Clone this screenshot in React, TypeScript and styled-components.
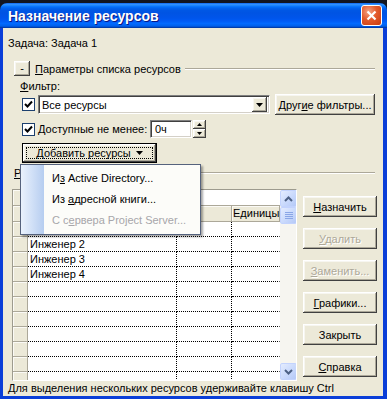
import React from "react";
import styled, { createGlobalStyle, css } from "styled-components";

const GlobalStyle = createGlobalStyle`
  html, body {
    margin: 0;
    padding: 0;
    background: #121622;
  }
  body {
    width: 387px;
    height: 399px;
    overflow: hidden;
    font-family: "Liberation Sans", Arial, sans-serif;
    font-size: 11px;
    color: #000;
  }
`;

const classic3d = css`
  background: #ece9d8;
  box-shadow: inset -1px -1px #404040, inset 1px 1px #ffffff,
    inset -2px -2px #aca899, inset 2px 2px #f7f6f0;
`;

const sunken = css`
  border: 1px solid;
  border-color: #808080 #ffffff #ffffff #808080;
  box-shadow: inset 1px 1px #404040, inset -1px -1px #d4d0c8;
`;

const Window = styled.div`
  margin-top: 3px;
  width: 387px;
  height: 396px;
  display: flex;
  flex-direction: column;
  border-radius: 7px 7px 0 0;
  overflow: hidden;
`;

const TitleBar = styled.div`
  flex: none;
  height: 25px;
  padding: 0 5px 0 8px;
  display: flex;
  align-items: center;
  justify-content: space-between;
  background: linear-gradient(
    to bottom,
    #0058ee 0%,
    #3593ff 4%,
    #288eff 8%,
    #127dff 12%,
    #036ffc 16%,
    #0262ee 22%,
    #0057e5 30%,
    #0054e3 40%,
    #0055eb 60%,
    #005bf5 72%,
    #026afe 82%,
    #0062ef 90%,
    #0052d6 95%,
    #003092 100%
  );
  color: #fff;
  font-weight: bold;
  font-size: 14px;
  text-shadow: 1px 1px #0a1883;
`;

const CloseButton = styled.div`
  width: 21px;
  height: 21px;
  box-sizing: border-box;
  border: 1px solid #fff;
  border-radius: 3px;
  background: radial-gradient(circle at 35% 30%, #f4a284 0%, #e35a2c 45%, #c63b10 100%);
  display: flex;
  align-items: center;
  justify-content: center;
`;

const Frame = styled.div`
  flex: 1;
  display: flex;
  flex-direction: column;
  background: #ece9d8;
  border-left: 3px solid #0a3ed8;
  border-right: 4px solid #0a3ed8;
  border-bottom: 3px solid #0a3ed8;
`;

const TaskLine = styled.div`
  margin: 8px 0 0 5px;
  height: 14px;
  line-height: 14px;
`;

const Section = styled.div<{ $top: number; $left: number; $h: number }>`
  margin-top: ${(p) => p.$top}px;
  padding-left: ${(p) => p.$left}px;
  padding-right: 8px;
  height: ${(p) => p.$h}px;
  display: flex;
  align-items: center;
  position: relative;
  white-space: nowrap;
`;

const Key = styled.span`
  text-decoration: underline;
`;

const Rule = styled.div`
  flex: 1;
  height: 0;
  border-top: 1px solid #aca899;
  border-bottom: 1px solid #fff;
  margin-left: 4px;
`;

const ToggleButton = styled.div`
  ${classic3d};
  width: 16px;
  height: 15px;
  display: flex;
  align-items: center;
  justify-content: center;
  font-size: 11px;
  line-height: 1;
  margin-right: 5px;
`;

const Check = styled.span`
  width: 13px;
  height: 13px;
  box-sizing: border-box;
  flex: none;
  background: #fff;
  border: 1px solid #1c3f6e;
  display: flex;
  align-items: center;
  justify-content: center;
`;

const Combo = styled.div`
  margin-left: 3px;
  width: 232px;
  height: 19px;
  box-sizing: border-box;
  ${sunken};
  background: #fff;
  display: flex;
  align-items: center;
  padding: 0 2px 0 3px;
`;

const ComboText = styled.span`
  flex: 1;
`;

const ArrowBox = styled.div<{ $w: number; $h: number }>`
  ${classic3d};
  width: ${(p) => p.$w}px;
  height: ${(p) => p.$h}px;
  display: flex;
  align-items: center;
  justify-content: center;
`;

const Button = styled.div<{ $w: number; $disabled?: boolean }>`
  ${classic3d};
  width: ${(p) => p.$w}px;
  height: 21px;
  flex: none;
  display: flex;
  align-items: center;
  justify-content: center;
  color: ${(p) => (p.$disabled ? "#aca899" : "#000")};
  ${(p) =>
    p.$disabled &&
    css`
      text-shadow: 1px 1px #fff;
    `}
`;

const Label = styled.span<{ $w?: number }>`
  flex: none;
  margin-left: 3px;
  width: ${(p) => (p.$w ? `${p.$w}px` : "auto")};
`;

const TextBox = styled.div`
  flex: none;
  width: 42px;
  height: 18px;
  box-sizing: border-box;
  ${sunken};
  background: #fff;
  padding-left: 4px;
  display: flex;
  align-items: center;
`;

const Spinner = styled.div`
  display: flex;
  flex-direction: column;
  margin-left: 1px;
`;

const AddButton = styled.div`
  position: relative;
  width: 135px;
  height: 20px;
  box-sizing: border-box;
  border: 1px solid #000;
  ${classic3d};
  display: flex;
  align-items: center;
  justify-content: center;
  gap: 5px;

  &::after {
    content: "";
    position: absolute;
    inset: 3px;
    border: 1px dotted #000;
  }
`;

const Menu = styled.div`
  position: absolute;
  z-index: 10;
  left: 17px;
  top: 21px;
  width: 181px;
  box-sizing: border-box;
  border: 1px solid #55627d;
  background: linear-gradient(90deg, #eaf2fd 0, #b6cdf0 23px, #fcfcf9 23px);
  padding: 3px 0;
  box-shadow: 2px 2px 2px rgba(0, 0, 0, 0.35);
`;

const MenuItem = styled.div<{ $disabled?: boolean }>`
  height: 21px;
  line-height: 21px;
  padding-left: 31px;
  color: ${(p) => (p.$disabled ? "#a7a6aa" : "#000")};
`;

const MainArea = styled.div`
  margin-top: 9px;
  padding-left: 9px;
  height: 192px;
  display: flex;
`;

const Table = styled.div`
  width: 285px;
  height: 192px;
  box-sizing: border-box;
  border: 1px solid;
  border-color: #9d9b8e #ffffff #ffffff #9d9b8e;
  display: flex;
  overflow: hidden;
`;

const Grid = styled.div`
  flex: 1;
  display: grid;
  grid-template-columns: 15px 149px 55px 1fr;
  grid-auto-rows: 15px;
  grid-template-rows: 16px 16px;
  background: #fff;
  align-content: start;
`;

const EditCell = styled.div`
  grid-column: 2 / 5;
  background: #fff;
  border-bottom: 1px solid #aca899;
`;

const SelCell = styled.div`
  background: #ece9d8;
  border-right: 1px solid #aca899;
  border-bottom: 1px solid #aca899;
  box-shadow: inset 1px 1px #fbfaf5;
`;

const HeadCell = styled.div<{ $pad?: number }>`
  background: #ece9d8;
  border-right: 1px solid #aca899;
  border-bottom: 1px solid #aca899;
  box-shadow: inset 1px 1px #fbfaf5;
  padding-left: ${(p) => p.$pad ?? 2}px;
  line-height: 15px;
  white-space: nowrap;
  overflow: visible;
`;

const DataCell = styled.div<{ $last?: boolean }>`
  border-bottom: 1px dotted #000;
  border-right: 1px dotted ${(p) => (p.$last ? "transparent" : "#000")};
  padding-left: 2px;
  line-height: 14px;
  white-space: nowrap;
  overflow: hidden;
`;

const ScrollBar = styled.div`
  width: 17px;
  flex: none;
  background: #f6f5f0;
  display: flex;
  flex-direction: column;
`;

const ScrollPart = styled.div`
  width: 17px;
  height: 17px;
  box-sizing: border-box;
  border: 1px solid #c3d3fd;
  border-radius: 2px;
  background: linear-gradient(135deg, #e4ecfe 0%, #c9d9fc 55%, #b5c9f7 100%);
  display: flex;
  align-items: center;
  justify-content: center;
`;

const Filler = styled.div`
  flex: 1;
`;

const SideButtons = styled.div`
  margin-left: 6px;
  padding-top: 7px;
  display: flex;
  flex-direction: column;
  gap: 11px;
`;

const Status = styled.div`
  margin-top: 1px;
  padding-left: 5px;
  height: 13px;
  line-height: 13px;
`;

const TriDown = ({ size = 7 }: { size?: number }) => (
  <svg width={size} height={Math.ceil(size / 2)} viewBox="0 0 7 4">
    <path d="M0 0h7L3.5 4z" fill="#000" />
  </svg>
);

const Chevron = ({ up }: { up?: boolean }) => (
  <svg width="9" height="6" viewBox="0 0 9 6">
    <path
      d={up ? "M1 5L4.5 1.5L8 5" : "M1 1L4.5 4.5L8 1"}
      fill="none"
      stroke="#4d6185"
      strokeWidth="2"
    />
  </svg>
);

const Grip = () => (
  <svg width="8" height="8" viewBox="0 0 8 8">
    {[0, 2, 4, 6].map((y) => (
      <rect key={y} x="0" y={y} width="8" height="1" fill="#8aa6e6" />
    ))}
  </svg>
);

const CheckMark = () => (
  <svg width="9" height="9" viewBox="0 0 9 9">
    <path d="M1 4l2.5 2.5L8 1.5" fill="none" stroke="#000" strokeWidth="2" />
  </svg>
);

const rows: string[] = ["Инженер 1", "Инженер 2", "Инженер 3", "Инженер 4"];
while (rows.length < 11) rows.push("");

export default function App() {
  return (
    <>
      <GlobalStyle />
      <Window>
        <TitleBar>
          <span>Назначение ресурсов</span>
          <CloseButton>
            <svg width="11" height="11" viewBox="0 0 11 11">
              <path d="M1.5 1.5l8 8M9.5 1.5l-8 8" stroke="#fff" strokeWidth="2.2" />
            </svg>
          </CloseButton>
        </TitleBar>
        <Frame>
          <TaskLine>Задача: Задача 1</TaskLine>

          <Section $top={11} $left={11} $h={15}>
            <ToggleButton>-</ToggleButton>
            <span>
              <Key>П</Key>араметры списка ресурсов
            </span>
            <Rule />
          </Section>

          <Section $top={3} $left={17} $h={14}>
            <span>
              <Key>Ф</Key>ильтр:
            </span>
          </Section>

          <Section $top={1} $left={19} $h={21}>
            <Check>
              <CheckMark />
            </Check>
            <Combo>
              <ComboText>Все ресурсы</ComboText>
              <ArrowBox $w={15} $h={15}>
                <TriDown />
              </ArrowBox>
            </Combo>
            <Button $w={100} style={{ marginLeft: 5 }}>
              <span>
                Друг<Key>и</Key>е фильтры...
              </span>
            </Button>
          </Section>

          <Section $top={5} $left={19} $h={18}>
            <Check>
              <CheckMark />
            </Check>
            <Label $w={112}>
              <Key>Д</Key>оступные не менее:
            </Label>
            <TextBox>0ч</TextBox>
            <Spinner>
              <ArrowBox $w={13} $h={9}>
                <svg width="5" height="3" viewBox="0 0 5 3">
                  <path d="M0 3h5L2.5 0z" fill="#000" />
                </svg>
              </ArrowBox>
              <ArrowBox $w={13} $h={9}>
                <svg width="5" height="3" viewBox="0 0 5 3">
                  <path d="M0 0h5L2.5 3z" fill="#000" />
                </svg>
              </ArrowBox>
            </Spinner>
          </Section>

          <Section $top={5} $left={19} $h={20}>
            <AddButton>
              <span>
                <Key>Д</Key>обавить ресурсы
              </span>
              <TriDown />
            </AddButton>
            <Menu>
              <MenuItem>
                И<Key>з</Key> Active Directory...
              </MenuItem>
              <MenuItem>
                Из <Key>а</Key>дресной книги...
              </MenuItem>
              <MenuItem $disabled>
                С с<Key>е</Key>рвера Project Server...
              </MenuItem>
            </Menu>
          </Section>

          <Section $top={3} $left={11} $h={14}>
            <span>
              <Key>Р</Key>есурсы из: Проект1
            </span>
            <Rule />
          </Section>

          <MainArea>
            <Table>
              <Grid>
                <SelCell />
                <EditCell />
                <SelCell />
                <HeadCell>Имя ресурса</HeadCell>
                <HeadCell />
                <HeadCell $pad={1}>Единицы</HeadCell>
                {rows.map((name, i) => (
                  <React.Fragment key={i}>
                    <SelCell />
                    <DataCell>{name}</DataCell>
                    <DataCell />
                    <DataCell $last />
                  </React.Fragment>
                ))}
              </Grid>
              <ScrollBar>
                <ScrollPart>
                  <Chevron up />
                </ScrollPart>
                <ScrollPart>
                  <Grip />
                </ScrollPart>
                <Filler />
                <ScrollPart>
                  <Chevron />
                </ScrollPart>
              </ScrollBar>
            </Table>
            <SideButtons>
              <Button $w={74}>
                <span>
                  <Key>Н</Key>азначить
                </span>
              </Button>
              <Button $w={74} $disabled>
                <span>
                  <Key>У</Key>далить
                </span>
              </Button>
              <Button $w={74} $disabled>
                <span>
                  <Key>З</Key>аменить...
                </span>
              </Button>
              <Button $w={74}>
                <span>
                  <Key>Г</Key>рафики...
                </span>
              </Button>
              <Button $w={74}>Закрыть</Button>
              <Button $w={74}>
                <span>
                  <Key>С</Key>правка
                </span>
              </Button>
            </SideButtons>
          </MainArea>

          <Status>Для выделения нескольких ресурсов удерживайте клавишу Ctrl</Status>
        </Frame>
      </Window>
    </>
  );
}
